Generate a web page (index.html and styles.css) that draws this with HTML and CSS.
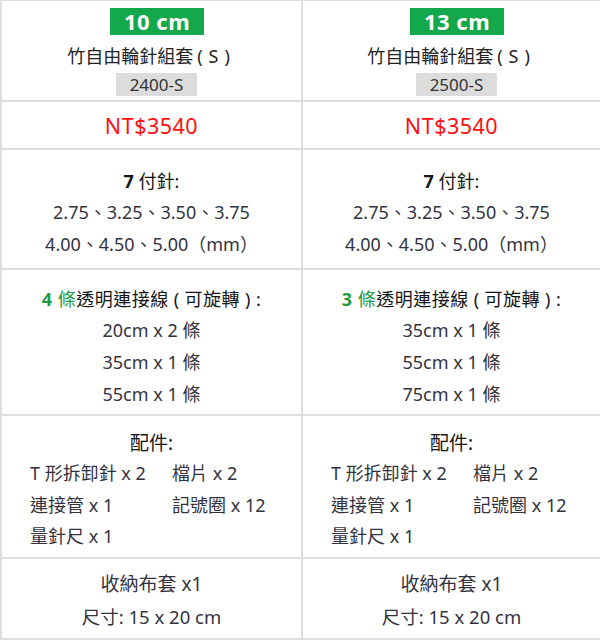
FILE: index.html
```html
<!DOCTYPE html>
<html lang="zh-Hant">
<head>
<meta charset="utf-8">
<link rel="stylesheet" href="styles.css">
</head>
<body>
<div class="table">
  <div class="cell head">
    <div class="size">10 cm</div>
    <div class="title">竹自由輪針組套<span class="paren">(S)</span></div>
    <div class="code">2400-S</div>
  </div>
  <div class="cell head">
    <div class="size">13 cm</div>
    <div class="title">竹自由輪針組套<span class="paren">(S)</span></div>
    <div class="code">2500-S</div>
  </div>

  <div class="cell price">NT$3540</div>
  <div class="cell price">NT$3540</div>

  <div class="cell list">
    <div class="heading"><b>7</b> 付針:</div>
    <div class="line">2.75、3.25、3.50、3.75</div>
    <div class="line">4.00、4.50、5.00（mm）</div>
  </div>
  <div class="cell list">
    <div class="heading"><b>7</b> 付針:</div>
    <div class="line">2.75、3.25、3.50、3.75</div>
    <div class="line">4.00、4.50、5.00（mm）</div>
  </div>

  <div class="cell list cords">
    <div class="heading"><span class="green"><b>4</b> 條</span>透明連接線<span class="paren">(</span>可旋轉<span class="paren">)</span>:</div>
    <div class="line">20cm x 2 條</div>
    <div class="line">35cm x 1 條</div>
    <div class="line">55cm x 1 條</div>
  </div>
  <div class="cell list cords">
    <div class="heading"><span class="green"><b>3</b> 條</span>透明連接線<span class="paren">(</span>可旋轉<span class="paren">)</span>:</div>
    <div class="line">35cm x 1 條</div>
    <div class="line">55cm x 1 條</div>
    <div class="line">75cm x 1 條</div>
  </div>

  <div class="cell parts">
    <div class="heading">配件:</div>
    <div class="grid">
      <span>T 形拆卸針 x 2</span><span>檔片 x 2</span>
      <span>連接管 x 1</span><span>記號圈 x 12</span>
      <span>量針尺 x 1</span>
    </div>
  </div>
  <div class="cell parts">
    <div class="heading">配件:</div>
    <div class="grid">
      <span>T 形拆卸針 x 2</span><span>檔片 x 2</span>
      <span>連接管 x 1</span><span>記號圈 x 12</span>
      <span>量針尺 x 1</span>
    </div>
  </div>

  <div class="cell bag">
    <div class="line big">收納布套 x1</div>
    <div class="line">尺寸: 15 x 20 cm</div>
  </div>
  <div class="cell bag">
    <div class="line big">收納布套 x1</div>
    <div class="line">尺寸: 15 x 20 cm</div>
  </div>
</div>
</body>
</html>
```

FILE: styles.css
```css
html, body {
  margin: 0;
  padding: 0;
  background: #fff;
}

body {
  font-family: "Noto Sans", "Noto Sans CJK TC", sans-serif;
  color: #333340;
}

.table {
  width: 600px;
  display: grid;
  grid-template-columns: 300px 300px;
  grid-template-rows: 101px 48px 120px 146px 143px 81px;
  box-sizing: border-box;
  border-top: 1px solid #dedede;
  border-left: 2px solid #dedede;
}

.cell {
  box-sizing: border-box;
  border-right: 2px solid #dedede;
  border-bottom: 2px solid #dedede;
  display: flex;
  flex-direction: column;
  align-items: center;
}

.cell:nth-child(odd) {
  border-right-width: 1px;
}
.cell:nth-child(even) {
  border-left: 1px solid #dedede;
}

.head {
  padding-top: 7px;
}

.size {
  background: #13a84b;
  color: #fff;
  font-weight: bold;
  font-size: 22px;
  line-height: 27px;
  width: 94px;
  text-align: center;
  letter-spacing: 0.5px;
  margin-left: 11px;
}

.title {
  font-size: 18px;
  line-height: 24px;
  margin-top: 9px;
  color: #222;
}

.paren {
  margin: 0 5px;
}

.title .paren {
  margin: 0 0 0 4px;
  letter-spacing: 6px;
}

.code {
  background: #dcdcdc;
  font-size: 17px;
  line-height: 23px;
  width: 81px;
  text-align: center;
  margin-top: 5px;
  margin-left: 10px;
  color: #333;
}

.price {
  justify-content: center;
  color: #ff1010;
  font-size: 21.5px;
  letter-spacing: 0.5px;
}

.list {
  padding-top: 16px;
}

.cords {
  padding-top: 14px;
}

.heading {
  font-size: 18px;
  line-height: 30px;
  color: #151515;
}

.cords .heading {
  letter-spacing: 0.5px;
}

.line {
  font-size: 18px;
  line-height: 32px;
}

.green {
  color: #1f9a3e;
}

.parts {
  align-items: stretch;
  padding-top: 12px;
}

.parts .heading {
  text-align: center;
  font-size: 19px;
}

.grid {
  display: grid;
  grid-template-columns: 142px auto;
  padding-left: 28px;
  font-size: 18px;
  line-height: 31.5px;
}

.bag {
  padding-top: 9px;
}

.bag .line.big {
  font-size: 19px;
  line-height: 33px;
}

.bag .line {
  font-size: 18.5px;
}
```
